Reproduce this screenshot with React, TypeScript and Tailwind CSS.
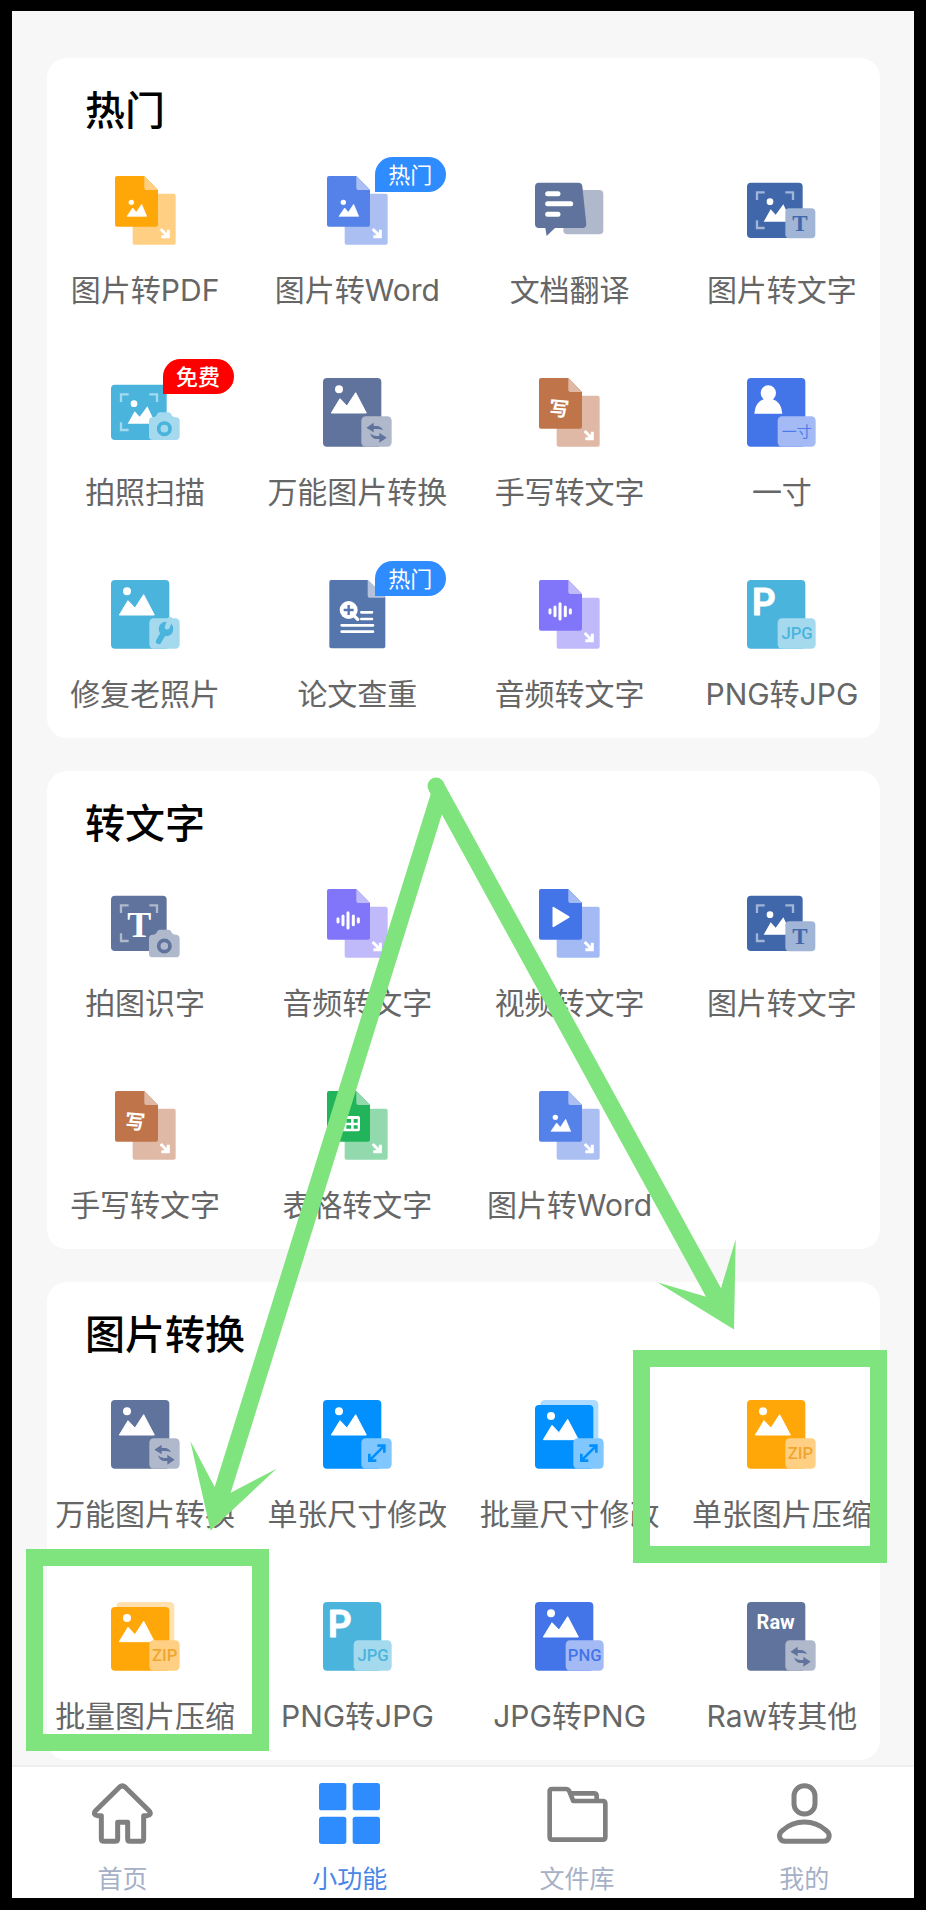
import type { ReactNode } from "react";

type Tone = { base: string; soft: string };

const orange: Tone = { base: "#ffa708", soft: "#ffd083" };
const word: Tone = { base: "#5482e8", soft: "#abbff3" };
const slate: Tone = { base: "#60739c", soft: "#b0b9cc" };
const navy: Tone = { base: "#3f67a9", soft: "#a1b5d7" };
const cyan: Tone = { base: "#4ab4dc", soft: "#a5daee" };
const brown: Tone = { base: "#c0744a", soft: "#dfb9a5" };
const royal: Tone = { base: "#4475e8", soft: "#a3baf5" };
const violet: Tone = { base: "#8176fa", soft: "#c0bafb" };
const green: Tone = { base: "#22b45a", soft: "#92d9ae" };
const azure: Tone = { base: "#0290ff", soft: "#80c7ff" };

function Icon({ children }: { children: ReactNode }) {
  return (
    <svg viewBox="0 0 207 207" className="size-[69px]" aria-hidden="true">
      {children}
    </svg>
  );
}

/* Front sheet with a folded corner over a second sheet with an arrow. */
function SheetIcon({ tone, children }: { tone: Tone; children: ReactNode }) {
  return (
    <Icon>
      <rect x="65" y="53" width="129" height="153" rx="6" fill={tone.soft} />
      <path d="M18 0H100L141 42V146Q141 152 135 152H18Q12 152 12 146V6Q12 0 18 0Z" fill={tone.base} />
      <path d="M100 0L141 42H106Q100 42 100 36Z" fill={tone.soft} />
      <path d="M149 159L171 181M172 161V182H151" fill="none" stroke="#fff" strokeWidth="9" />
      {children}
    </Icon>
  );
}

function SmallPicture() {
  return (
    <g fill="#fff">
      <circle cx="61" cy="79" r="8" />
      <path d="M48 121L65 96L76 109L92 85L107 121Z" stroke="#fff" strokeWidth="2" strokeLinejoin="round" />
    </g>
  );
}

function Brush() {
  return (
    <text x="72" y="114" fontSize="60" fontWeight="700" textAnchor="middle" fill="#fff" transform="rotate(5 72 92)" className="font-['Noto_Sans_CJK_SC',sans-serif]">
      写
    </text>
  );
}

function Wave() {
  return (
    <path d="M45 89V99M60 81V107M75 71V117M91 81V107M106 89V99" stroke="#fff" strokeWidth="9" strokeLinecap="round" />
  );
}

function BigPicture() {
  return (
    <g fill="#fff">
      <circle cx="48" cy="34" r="12" />
      <path d="M25 105L51 62L72 84L98 44L130 105Z" stroke="#fff" strokeWidth="3" strokeLinejoin="round" />
    </g>
  );
}

/* Portrait card, optionally stacked, with a badge in the lower right corner. */
function CardIcon({ tone, stacked, wide, art, children }: { tone: Tone; stacked?: boolean; wide?: boolean; art: ReactNode; children: ReactNode }) {
  return (
    <Icon>
      {stacked && <rect x="16" y="0" width="174" height="190" rx="14" fill={tone.soft} opacity="0.65" />}
      <rect x="0" y={stacked ? 15 : 0} width="175" height={stacked ? 191 : 206} rx="12" fill={tone.base} />
      <g transform={stacked ? "translate(0 14)" : undefined}>{art}</g>
      <rect x={wide ? 92 : 115} y="115" width={wide ? 114 : 91} height="91" rx="13" fill={tone.soft} />
      {children}
    </Icon>
  );
}

function Tag({ x, color, children }: { x: number; color: string; children: string }) {
  return (
    <text x={x} y="178" fontSize="50" fontWeight="500" textAnchor="middle" fill={color} className="font-[Roboto,sans-serif]">
      {children}
    </text>
  );
}

function LetterP() {
  return (
    <text x="14" y="104" fontSize="112" fontWeight="600" fill="#fff" stroke="#fff" strokeWidth="3" strokeLinejoin="round" className="font-[Inter,sans-serif]">
      P
    </text>
  );
}

function Swap() {
  return (
    <g fill={slate.base}>
      <path d="M130 149L152 134V144H162Q174 145 180 156Q172 153 162 153H152V163Z" />
      <path d="M191 179L169 164V174H158Q147 173 141 166Q146 182 158 183H169V194Z" />
    </g>
  );
}

function Resize() {
  return (
    <path d="M139 182L184 137M163 137H184V158M139 161V182H160" fill="none" stroke={azure.base} strokeWidth="8" />
  );
}

function ScanFrame({ tone }: { tone: Tone }) {
  return (
    <>
      <rect x="0" y="20" width="167" height="166" rx="12" fill={tone.base} />
      <path d="M30 72V49H53M115 49H138V72M30 133V156H53" fill="none" stroke={tone.soft} strokeWidth="7" />
    </>
  );
}

function ScanPicture() {
  return (
    <g fill="#fff">
      <circle cx="69" cy="77" r="10" />
      <path d="M50 137L71 100L86 116L109 85L134 137Z" />
    </g>
  );
}

function Camera({ tone, y }: { tone: Tone; y: number }) {
  return (
    <g transform={`translate(0 ${y})`}>
      <path d="M125 15Q136 14 138 6Q140 0 147 0H172Q179 0 181 6Q183 14 194 15Q206 15 206 27V72Q206 83 194 83H125Q114 83 114 72V27Q114 15 125 15Z" fill={tone.soft} />
      <circle cx="160" cy="49" r="17" fill="none" stroke={tone.base} strokeWidth="11" />
    </g>
  );
}

function PhotoTextIcon() {
  return (
    <Icon>
      <ScanFrame tone={navy} />
      <ScanPicture />
      <rect x="115" y="97" width="90" height="90" rx="12" fill={navy.soft} />
      <text x="159" y="164" fontSize="69" fontWeight="700" textAnchor="middle" fill={navy.base} className="font-['Liberation_Serif',serif]">
        T
      </text>
    </Icon>
  );
}

function CameraScanIcon() {
  return (
    <Icon>
      <ScanFrame tone={cyan} />
      <ScanPicture />
      <Camera tone={cyan} y={103} />
    </Icon>
  );
}

function CameraTextIcon() {
  return (
    <Icon>
      <ScanFrame tone={slate} />
      <text x="85" y="143" fontSize="108" fontWeight="700" textAnchor="middle" fill="#fff" className="font-['Liberation_Serif',serif]">
        T
      </text>
      <Camera tone={slate} y={122} />
    </Icon>
  );
}

function TranslateIcon() {
  return (
    <Icon>
      <rect x="85" y="42" width="120" height="133" rx="12" fill={slate.soft} />
      <path d="M12 20H130Q141 20 142 31L154 145Q154 156 143 156H60L35 180L31 156H12Q0 156 0 144V32Q0 20 12 20Z" fill={slate.base} />
      <path d="M38 53H69M38 83H107M38 115H69" stroke="#fff" strokeWidth="15" strokeLinecap="round" />
    </Icon>
  );
}

function PaperCheckIcon() {
  return (
    <Icon>
      <path d="M25 0H134L187 52V199Q187 205 181 205H25Q19 205 19 199V6Q19 0 25 0Z" fill="#5575ad" />
      <path d="M134 0L187 53H140Q134 53 134 47Z" fill="#b4c1da" />
      <circle cx="77" cy="90" r="27" fill="#fff" />
      <path d="M92 106L104 118" stroke="#fff" strokeWidth="10" strokeLinecap="round" />
      <path d="M62 90H92M77 75V105" stroke="#5575ad" strokeWidth="7" />
      <path d="M115 97H147M115 117H147M56 136H150M56 155H150" stroke="#fff" strokeWidth="8" strokeLinecap="round" />
    </Icon>
  );
}

const pdfIcon = <SheetIcon tone={orange}><SmallPicture /></SheetIcon>;
const wordIcon = <SheetIcon tone={word}><SmallPicture /></SheetIcon>;
const handIcon = <SheetIcon tone={brown}><Brush /></SheetIcon>;
const audioIcon = <SheetIcon tone={violet}><Wave /></SheetIcon>;
const videoIcon = (
  <SheetIcon tone={royal}>
    <path d="M55 56L101 84L55 112Z" fill="#fff" stroke="#fff" strokeWidth="5" strokeLinejoin="round" />
  </SheetIcon>
);
const tableIcon = (
  <SheetIcon tone={green}>
    <rect x="42" y="75" width="69" height="46" rx="6" fill="#fff" />
    <path d="M50 84H62V95H50ZM70 84H84V95H70ZM92 84H104V95H92ZM50 103H62V113H50ZM70 103H84V113H70ZM92 103H104V113H92Z" fill={green.base} />
  </SheetIcon>
);
const anyIcon = <CardIcon tone={slate} art={<BigPicture />}><Swap /></CardIcon>;
const idPhotoIcon = (
  <CardIcon
    tone={royal}
    wide
    art={
      <g fill="#fff">
        <circle cx="64" cy="45" r="23" />
        <path d="M22 107Q24 72 52 63H76Q104 72 106 107Z" />
      </g>
    }
  >
    <text x="149" y="177" fontSize="45" textAnchor="middle" fill={royal.base} opacity="0.9" className="font-['Noto_Sans_CJK_SC',sans-serif]">
      一寸
    </text>
  </CardIcon>
);
const repairIcon = (
  <CardIcon tone={cyan} art={<BigPicture />}>
    <path d="M164 148L143 184" stroke={cyan.base} strokeWidth="17" strokeLinecap="round" />
    <circle cx="165" cy="147" r="22" fill={cyan.base} />
    <path d="M169 141L177 118" stroke={cyan.soft} strokeWidth="15" strokeLinecap="round" />
  </CardIcon>
);
const jpgIcon = <CardIcon tone={cyan} wide art={<LetterP />}><Tag x={150} color={cyan.base}>JPG</Tag></CardIcon>;
const pngIcon = <CardIcon tone={royal} wide art={<BigPicture />}><Tag x={149} color={royal.base}>PNG</Tag></CardIcon>;
const resizeIcon = <CardIcon tone={azure} art={<BigPicture />}><Resize /></CardIcon>;
const batchResizeIcon = <CardIcon tone={azure} stacked art={<BigPicture />}><Resize /></CardIcon>;
const zipIcon = <CardIcon tone={orange} art={<BigPicture />}><Tag x={160} color="#f0a62e">ZIP</Tag></CardIcon>;
const batchZipIcon = <CardIcon tone={orange} stacked art={<BigPicture />}><Tag x={161} color="#f0a62e">ZIP</Tag></CardIcon>;
const rawIcon = (
  <CardIcon
    tone={slate}
    art={
      <text x="86" y="80" fontSize="60" fontWeight="700" textAnchor="middle" fill="#fff" className="font-[Roboto,sans-serif]">
        Raw
      </text>
    }
  >
    <Swap />
  </CardIcon>
);

type Tool = { label: string; icon: ReactNode; badge?: "热门" | "免费" };

const sections: { title: string; tools: Tool[] }[] = [
  {
    title: "热门",
    tools: [
      { label: "图片转PDF", icon: pdfIcon },
      { label: "图片转Word", icon: wordIcon, badge: "热门" },
      { label: "文档翻译", icon: <TranslateIcon /> },
      { label: "图片转文字", icon: <PhotoTextIcon /> },
      { label: "拍照扫描", icon: <CameraScanIcon />, badge: "免费" },
      { label: "万能图片转换", icon: anyIcon },
      { label: "手写转文字", icon: handIcon },
      { label: "一寸", icon: idPhotoIcon },
      { label: "修复老照片", icon: repairIcon },
      { label: "论文查重", icon: <PaperCheckIcon />, badge: "热门" },
      { label: "音频转文字", icon: audioIcon },
      { label: "PNG转JPG", icon: jpgIcon },
    ],
  },
  {
    title: "转文字",
    tools: [
      { label: "拍图识字", icon: <CameraTextIcon /> },
      { label: "音频转文字", icon: audioIcon },
      { label: "视频转文字", icon: videoIcon },
      { label: "图片转文字", icon: <PhotoTextIcon /> },
      { label: "手写转文字", icon: handIcon },
      { label: "表格转文字", icon: tableIcon },
      { label: "图片转Word", icon: wordIcon },
    ],
  },
  {
    title: "图片转换",
    tools: [
      { label: "万能图片转换", icon: anyIcon },
      { label: "单张尺寸修改", icon: resizeIcon },
      { label: "批量尺寸修改", icon: batchResizeIcon },
      { label: "单张图片压缩", icon: zipIcon },
      { label: "批量图片压缩", icon: batchZipIcon },
      { label: "PNG转JPG", icon: jpgIcon },
      { label: "JPG转PNG", icon: pngIcon },
      { label: "Raw转其他", icon: rawIcon },
    ],
  },
];

function ToolButton({ label, icon, badge }: Tool) {
  return (
    <button type="button" className="flex flex-col items-center gap-[27px]">
      <span className="relative block">
        {icon}
        {badge && (
          <span
            className={`absolute -top-[19px] left-[52px] flex h-[35px] w-[71px] items-center justify-center rounded-full rounded-bl-none text-[22px] leading-none text-white ${
              badge === "免费" ? "bg-[#ff0000] font-medium" : "bg-[#2f8cff]"
            }`}
          >
            {badge}
          </span>
        )}
      </span>
      <span className="text-[30px] leading-9 whitespace-nowrap text-[#666666]">{label}</span>
    </button>
  );
}

const tabs: { label: string; active?: boolean; art: ReactNode }[] = [
  {
    label: "首页",
    art: (
      <path d="M83 12Q91 5 99 12L172 84Q180 95 166 98H155V167Q155 175 147 175H114Q107 175 107 167V118H77V167Q77 175 69 175H37Q28 175 28 167V98H16Q2 95 10 84Z" />
    ),
  },
  {
    label: "小功能",
    active: true,
    art: (
      <g fill="#2f8cff" stroke="none">
        <rect x="0" y="0" width="82" height="82" rx="8" />
        <rect x="101" y="0" width="82" height="82" rx="8" />
        <rect x="0" y="101" width="82" height="82" rx="8" />
        <rect x="101" y="101" width="82" height="82" rx="8" />
      </g>
    ),
  },
  {
    label: "文件库",
    art: (
      <path d="M8 25Q8 18 15 18H57Q64 18 67 25L79 54H167Q175 54 175 62V162Q175 170 167 170H16Q8 170 8 162ZM70 31H141Q149 31 149 39V52" strokeWidth="14" />
    ),
  },
  {
    label: "我的",
    art: (
      <>
        <rect x="60" y="8" width="63" height="85" rx="31" />
        <path d="M34 175H148C168 175 171 152 156 142C119 109 63 109 26 142C11 152 14 175 34 175Z" />
      </>
    ),
  },
];

function Annotations() {
  return (
    <svg
      viewBox="0 0 926 1910"
      preserveAspectRatio="none"
      className="pointer-events-none absolute inset-0 size-full"
      fill="#80e47e"
      aria-hidden="true"
    >
      <circle cx="436" cy="786" r="8.5" />
      <path d="M431 793L214.7 1487L190.3 1441L210.5 1530.5L276.5 1468.7L230.7 1492.7L447 798Z" />
      <path d="M443 781.5L721 1288.3L735.7 1239.3L734 1329.5L657.3 1282.3L706 1296.7L429 791Z" />
      <rect x="641.5" y="1358.5" width="237" height="196" fill="none" stroke="#80e47e" strokeWidth="17" />
      <rect x="34.5" y="1557.5" width="226" height="185" fill="none" stroke="#80e47e" strokeWidth="17" />
    </svg>
  );
}

export default function App() {
  return (
    <div className="relative bg-black px-3 pt-[11px] pb-3 font-[Inter,'Noto_Sans_CJK_SC',sans-serif]">
      <div className="overflow-hidden bg-[#f7f7f7]">
        <main className="flex flex-col gap-[33px] pt-[47px] pr-[34px] pb-[5px] pl-[35px]">
          {sections.map((section) => (
            <section key={section.title} className="rounded-[20px] bg-white pt-[33px] pb-[26px]">
              <h2 className="pl-[38px] text-[40px] leading-10 font-medium text-black">{section.title}</h2>
              <div className="-mx-2 mt-[45px] grid grid-cols-4 gap-y-[70px]">
                {section.tools.map((tool) => (
                  <ToolButton key={tool.label} {...tool} />
                ))}
              </div>
            </section>
          ))}
        </main>
        <nav className="border-t-2 border-[#eeeeee] bg-white pt-4 pb-[3px]">
          <div className="-mr-1 -ml-[3px] grid grid-cols-4">
            {tabs.map((tab) => (
              <a key={tab.label} href="#" className="flex flex-col items-center gap-5">
                <svg viewBox="0 0 183 183" className="size-[61px]" fill="none" stroke="#808080" strokeWidth="15" strokeLinejoin="round" aria-hidden="true">
                  {tab.art}
                </svg>
                <span className={`text-[25px] leading-[31px] ${tab.active ? "text-[#4a86e6]" : "text-[#a6b0c6]"}`}>{tab.label}</span>
              </a>
            ))}
          </div>
        </nav>
      </div>
      <Annotations />
    </div>
  );
}
